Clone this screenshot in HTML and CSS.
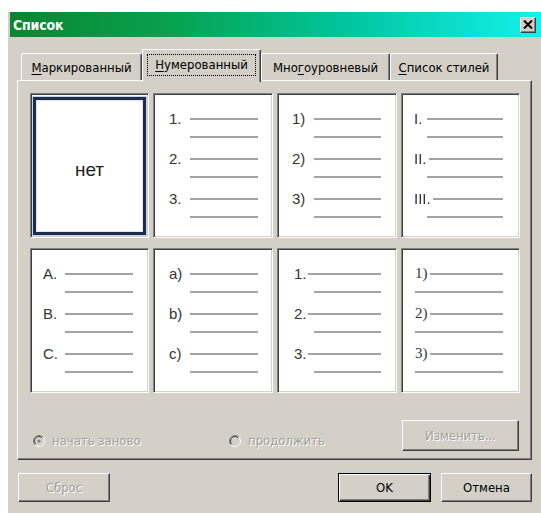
FILE: index.html
```html
<!DOCTYPE html>
<html lang="ru">
<head>
<meta charset="utf-8">
<title>Список</title>
<link rel="stylesheet" href="styles.css">
</head>
<body>
<div class="dialog">
  <div class="titlebar">
    <span class="title">Список</span>
    <button class="close" type="button" aria-label="Закрыть">
      <svg width="10" height="9" viewBox="0 0 10 9"><path d="M1 0.5 L9 8.5 M9 0.5 L1 8.5" stroke="#000" stroke-width="2" fill="none"/></svg>
    </button>
  </div>

  <div class="tabs">
    <div class="tab tab-bullets"><u>М</u>аркированный</div>
    <div class="tab tab-numbers active"><span class="focus"><u>Н</u>умерованный</span></div>
    <div class="tab tab-multi">Мно<u>г</u>оуровневый</div>
    <div class="tab tab-styles"><u>С</u>писок стилей</div>
  </div>

  <div class="panel">
    <div class="grid">
      <div class="cell none"><div class="sel">нет</div></div>

      <div class="cell fmt f-dec">
        <div class="item"><span class="num">1.</span><i class="ln"></i></div><div class="sub"><i class="ln"></i></div>
        <div class="item"><span class="num">2.</span><i class="ln"></i></div><div class="sub"><i class="ln"></i></div>
        <div class="item"><span class="num">3.</span><i class="ln"></i></div><div class="sub"><i class="ln"></i></div>
      </div>

      <div class="cell fmt f-paren">
        <div class="item"><span class="num">1)</span><i class="ln"></i></div><div class="sub"><i class="ln"></i></div>
        <div class="item"><span class="num">2)</span><i class="ln"></i></div><div class="sub"><i class="ln"></i></div>
        <div class="item"><span class="num">3)</span><i class="ln"></i></div><div class="sub"><i class="ln"></i></div>
      </div>

      <div class="cell fmt f-roman">
        <div class="item"><span class="num">I.</span><i class="ln"></i></div><div class="sub"><i class="ln"></i></div>
        <div class="item"><span class="num">II.</span><i class="ln"></i></div><div class="sub"><i class="ln"></i></div>
        <div class="item"><span class="num">III.</span><i class="ln"></i></div><div class="sub"><i class="ln"></i></div>
      </div>

      <div class="cell fmt f-upper">
        <div class="item"><span class="num">A.</span><i class="ln"></i></div><div class="sub"><i class="ln"></i></div>
        <div class="item"><span class="num">B.</span><i class="ln"></i></div><div class="sub"><i class="ln"></i></div>
        <div class="item"><span class="num">C.</span><i class="ln"></i></div><div class="sub"><i class="ln"></i></div>
      </div>

      <div class="cell fmt f-lower">
        <div class="item"><span class="num">a)</span><i class="ln"></i></div><div class="sub"><i class="ln"></i></div>
        <div class="item"><span class="num">b)</span><i class="ln"></i></div><div class="sub"><i class="ln"></i></div>
        <div class="item"><span class="num">c)</span><i class="ln"></i></div><div class="sub"><i class="ln"></i></div>
      </div>

      <div class="cell fmt f-tight">
        <div class="item"><span class="num">1.</span><i class="ln"></i></div><div class="sub"><i class="ln"></i></div>
        <div class="item"><span class="num">2.</span><i class="ln"></i></div><div class="sub"><i class="ln"></i></div>
        <div class="item"><span class="num">3.</span><i class="ln"></i></div><div class="sub"><i class="ln"></i></div>
      </div>

      <div class="cell fmt f-serif">
        <div class="item"><span class="num">1)</span><i class="ln"></i></div><div class="sub"><i class="ln"></i></div>
        <div class="item"><span class="num">2)</span><i class="ln"></i></div><div class="sub"><i class="ln"></i></div>
        <div class="item"><span class="num">3)</span><i class="ln"></i></div><div class="sub"><i class="ln"></i></div>
      </div>
    </div>

    <div class="options">
      <label class="radio restart">
        <svg width="12" height="12" viewBox="0 0 12 12">
          <circle cx="6" cy="6" r="5.5" fill="#d4d0c8"/>
          <path d="M9.9 2.1 A5.5 5.5 0 0 0 2.1 9.9" stroke="#808080" stroke-width="1" fill="none"/>
          <path d="M9.2 2.8 A4.5 4.5 0 0 0 2.8 9.2" stroke="#404040" stroke-width="1" fill="none"/>
          <path d="M2.1 9.9 A5.5 5.5 0 0 0 9.9 2.1" stroke="#ffffff" stroke-width="1" fill="none"/>
          <circle cx="6" cy="6" r="1.6" fill="#808080"/>
        </svg>
        <span class="dis">начать заново</span>
      </label>
      <label class="radio continue">
        <svg width="12" height="12" viewBox="0 0 12 12">
          <circle cx="6" cy="6" r="5.5" fill="#d4d0c8"/>
          <path d="M9.9 2.1 A5.5 5.5 0 0 0 2.1 9.9" stroke="#808080" stroke-width="1" fill="none"/>
          <path d="M9.2 2.8 A4.5 4.5 0 0 0 2.8 9.2" stroke="#404040" stroke-width="1" fill="none"/>
          <path d="M2.1 9.9 A5.5 5.5 0 0 0 9.9 2.1" stroke="#ffffff" stroke-width="1" fill="none"/>
        </svg>
        <span class="dis">продолжить</span>
      </label>
      <button class="btn change" type="button"><span class="dis">Изменить...</span></button>
    </div>
  </div>

  <div class="footer">
    <button class="btn reset" type="button"><span class="dis">Сброс</span></button>
    <button class="btn ok" type="button">OK</button>
    <button class="btn cancel" type="button">Отмена</button>
  </div>
</div>
</body>
</html>
```

FILE: styles.css
```css
/* Classic Windows "Список" numbering dialog */
html, body {
  margin: 0;
  padding: 0;
  background: #ffffff;
}

body {
  font-family: "DejaVu Sans Condensed", "DejaVu Sans", sans-serif;
  font-size: 13px;
  color: #000;
}

.dialog {
  margin: 12px 0 0 8px;
  width: 533px;
  height: 501px;
  background: #d4d0c8;
  display: flex;
  flex-direction: column;
}

/* ---- caption ---- */
.titlebar {
  height: 25px;
  margin-left: 2px;
  display: flex;
  align-items: center;
  padding: 0 5px 0 3px;
  background: linear-gradient(90deg, #0c8430 0%, #07a24e 30%, #00c49a 62%, #14f0ee 100%);
}

.title {
  flex: 1;
  color: #fff;
  font-weight: bold;
  font-size: 14px;
  letter-spacing: -0.2px;
}

.close {
  width: 16px;
  height: 16px;
  padding: 0;
  margin: 0;
  display: flex;
  align-items: center;
  justify-content: center;
  background: #d4d0c8;
  border: 1px solid;
  border-color: #fff #404040 #404040 #fff;
  box-shadow: inset -1px -1px #808080;
}

/* ---- tab strip ---- */
.tabs {
  display: flex;
  align-items: flex-end;
  height: 31px;
  margin: 12px 0 0 13px;
  position: relative;
  z-index: 1;
}

.tab {
  height: 27px;
  box-sizing: border-box;
  display: flex;
  align-items: center;
  justify-content: center;
  background: #d4d0c8;
  border-top: 1px solid #fff;
  border-left: 1px solid #fff;
  border-right: 1px solid #404040;
  box-shadow: inset -1px 0 #808080;
  border-radius: 2px 2px 0 0;
  padding-top: 1px;
}

.tab u, .focus u { text-decoration-thickness: 1px; text-underline-offset: 2px; }

.tab-bullets { width: 121px; }
.tab-numbers { width: 119px; }
.tab-multi { width: 129px; }
.tab-styles { width: 108px; }

.tab.active {
  height: 33px;
  margin-bottom: -2px;
  padding-top: 0;
  padding-bottom: 3px;
}

.focus {
  padding: 2px 7px 3px 7px;
  outline: 1px dotted #000;
  outline-offset: 0;
}

/* ---- page with formats ---- */
.panel {
  margin-left: 9px;
  width: 515px;
  height: 380px;
  box-sizing: border-box;
  border: 1px solid;
  border-color: #fff #404040 #404040 #fff;
  box-shadow: inset -1px -1px #808080;
  padding: 12px 0 0 12px;
}

.grid {
  display: grid;
  grid-template-columns: 119px 120px 120px 119px;
  grid-template-rows: 145px 145px;
  column-gap: 4px;
  row-gap: 10px;
}

.cell {
  background: #fff;
  box-sizing: border-box;
  border: 1px solid;
  border-color: #808080 #fff #fff #808080;
  box-shadow: inset 1px 1px #404040, inset -1px -1px #d4d0c8;
  font-family: "Liberation Sans", Arial, sans-serif;
  font-size: 15px;
  color: #353535;
}

.none {
  padding: 3px 2px 2px 2px;
}

.sel {
  height: 100%;
  box-sizing: border-box;
  border: 3px solid #1e2c50;
  box-shadow: 0 0 0 1px #c9d5e4, inset 0 0 0 1px #dfe6ef;
  display: flex;
  align-items: center;
  justify-content: center;
  padding-top: 7px;
  font-size: 19px;
  color: #222;
}

/* numbered sample: a number with a line, then a continuation line */
.fmt {
  padding-top: 16px;
  display: flex;
  flex-direction: column;
}

.item, .sub {
  height: 18px;
  display: flex;
  align-items: center;
}

.sub { margin-bottom: 4px; }

.num {
  flex: none;
  line-height: 1;
  padding-bottom: 1px;
}

.ln {
  flex: 1;
  height: 2px;
  background: #a3a3a3;
}

.f-dec, .f-lower { padding-left: 15px; padding-right: 14px; }
.f-dec .num, .f-lower .num { min-width: 21px; }
.f-dec .sub, .f-lower .sub { margin-left: 21px; }

.f-paren { padding-left: 14px; padding-right: 15px; }
.f-paren .num { min-width: 22px; }
.f-paren .sub { margin-left: 22px; }

.f-roman { padding-left: 12px; padding-right: 16px; will-change: transform; }
.f-roman .num { min-width: 11px; margin-right: 2px; color: #333; }
.f-roman .sub { margin-left: 13px; }

.f-upper { padding-left: 12px; padding-right: 15px; }
.f-upper .num { min-width: 22px; }
.f-upper .sub { margin-left: 22px; }

.f-tight { padding-left: 16px; padding-right: 15px; }
.f-tight .num { margin-right: 1px; }
.f-tight .sub { margin-left: 20px; }

.f-serif { padding-left: 13px; padding-right: 16px; font-family: "Liberation Serif", "Times New Roman", serif; }
.f-serif .num { margin-right: 2px; }

/* ---- restart / continue row ---- */
.options {
  display: flex;
  align-items: flex-start;
  margin-top: 27px;
  padding-right: 12px;
}

.radio {
  display: flex;
  align-items: center;
  gap: 7px;
  margin-top: 13px;
}

.restart { margin-left: 3px; width: 196px; }
.continue { flex: 1; gap: 7px; }

.dis {
  color: #a2a09a;
  text-shadow: 1px 1px 0 #fff;
}

/* ---- push buttons ---- */
.btn {
  font: inherit;
  color: #000;
  background: #d4d0c8;
  box-sizing: border-box;
  border: 1px solid;
  border-color: #fff #404040 #404040 #fff;
  box-shadow: inset -1px -1px #808080;
  padding: 0;
  margin: 0;
}

.change {
  width: 117px;
  height: 31px;
}

.footer {
  display: flex;
  align-items: center;
  margin-top: 13px;
  padding: 0 9px 0 10px;
}

.footer .btn { height: 29px; }

.reset { width: 92px; margin-right: auto; }

.ok {
  width: 93px;
  margin-right: 10px;
  border: 1px solid #000;
  box-shadow: inset 1px 1px #fff, inset -1px -1px #404040, inset -2px -2px #808080;
}

.cancel { width: 91px; }
```
